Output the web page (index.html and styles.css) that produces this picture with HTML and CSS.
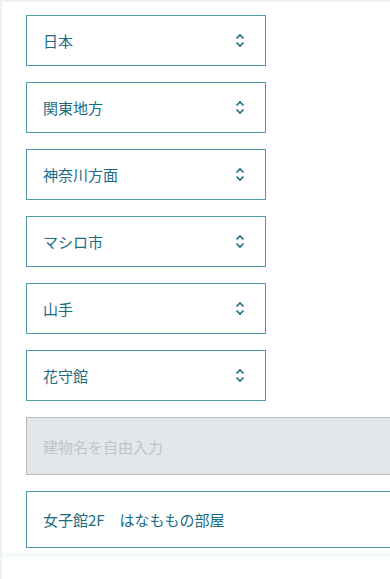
FILE: index.html
```html
<!DOCTYPE html>
<html lang="ja">
<head>
    <meta charset="UTF-8">
    <meta name="viewport" content="width=device-width, initial-scale=1.0">
    <title>住所入力</title>
    <link rel="stylesheet" href="styles.css">
</head>
<body>
    <div class="panel">
        <div class="select-box"><span>日本</span><svg class="chevron" viewBox="0 0 10 14"><path d="M1.5 5 L5 1.5 L8.5 5 M1.5 9 L5 12.5 L8.5 9"/></svg></div>
        <div class="select-box"><span>関東地方</span><svg class="chevron" viewBox="0 0 10 14"><path d="M1.5 5 L5 1.5 L8.5 5 M1.5 9 L5 12.5 L8.5 9"/></svg></div>
        <div class="select-box"><span>神奈川方面</span><svg class="chevron" viewBox="0 0 10 14"><path d="M1.5 5 L5 1.5 L8.5 5 M1.5 9 L5 12.5 L8.5 9"/></svg></div>
        <div class="select-box"><span>マシロ市</span><svg class="chevron" viewBox="0 0 10 14"><path d="M1.5 5 L5 1.5 L8.5 5 M1.5 9 L5 12.5 L8.5 9"/></svg></div>
        <div class="select-box"><span>山手</span><svg class="chevron" viewBox="0 0 10 14"><path d="M1.5 5 L5 1.5 L8.5 5 M1.5 9 L5 12.5 L8.5 9"/></svg></div>
        <div class="select-box"><span>花守館</span><svg class="chevron" viewBox="0 0 10 14"><path d="M1.5 5 L5 1.5 L8.5 5 M1.5 9 L5 12.5 L8.5 9"/></svg></div>

        <div class="text-field disabled">建物名を自由入力</div>
        <div class="text-field">女子館2F　はなももの部屋</div>
    </div>
    <div class="panel-edge"></div>
</body>
</html>
```

FILE: styles.css
```css
body {
    margin: 0;
    background-color: #fff;
    border-left: 2px solid #eef2f5;
    border-top: 2px solid #eef2f5;
    font-family: "Noto Sans CJK JP", "Noto Sans", sans-serif;
    height: 577px;
    overflow: hidden;
}

.panel {
    background: #fff;
    padding: 13px 0 5px 24px;
    display: flex;
    flex-direction: column;
    gap: 16px;
    overflow: hidden;
}

.panel-edge {
    height: 7px;
    background: linear-gradient(to bottom, #f2f7f9, #ffffff);
}

.select-box {
    box-sizing: border-box;
    width: 240px;
    height: 51px;
    border: 1px solid #4f99aa;
    display: flex;
    align-items: center;
    justify-content: space-between;
    padding: 0 20px 0 16px;
    color: #1d6b82;
    font-size: 15px;
}

.chevron {
    width: 10px;
    height: 15px;
    fill: none;
    stroke: #1d6b82;
    stroke-width: 1.6;
}

.text-field {
    box-sizing: border-box;
    width: 400px;
    height: 57px;
    border: 1px solid #4f99aa;
    display: flex;
    align-items: center;
    padding-left: 16px;
    color: #1d6b82;
    font-size: 15px;
}

.text-field.disabled {
    height: 58px;
    background: #e2e7ea;
    border-color: #b4bcc0;
    color: #bfc4c8;
}
```
